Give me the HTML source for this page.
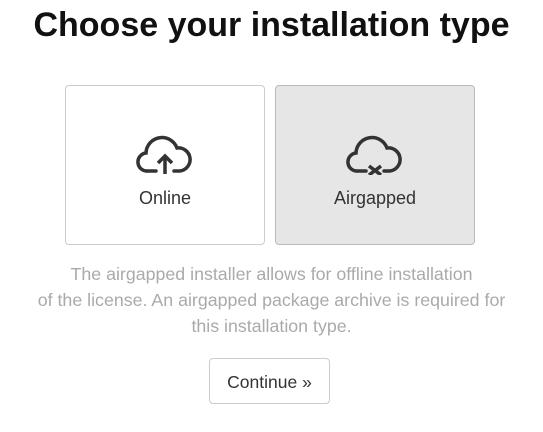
<!DOCTYPE html><html><head><style>
body{margin:0;width:543px;height:432px;background:#fff;font-family:"Liberation Sans",sans-serif;position:relative;overflow:hidden}
h1{position:absolute;top:6px;left:0;width:543px;text-align:center;margin:0;font-size:34px;font-weight:bold;color:#111}
.card{position:absolute;top:85px;width:198px;height:158px;border:1px solid #ccc;border-radius:4px;box-sizing:content-box}
.card .lbl{position:absolute;top:102px;width:100%;text-align:center;font-size:18px;color:#333}
.card svg{position:absolute;left:70px;top:47px}
p{position:absolute;top:261px;left:0;width:543px;text-align:center;margin:0;font-size:17.8px;line-height:26px;color:#aaa}
.btn{position:absolute;left:209px;top:358px;width:119px;height:44px;border:1px solid #ccc;border-radius:4px;text-align:center;line-height:46px;font-size:17.5px;color:#333}
</style></head><body>
<h1>Choose your installation type</h1>
<div class="card" style="left:65px;background:#fff">
<svg width="58" height="42" viewBox="0 0 58 42" fill="none" stroke="#333" stroke-width="3.5" stroke-linecap="round"><path d="M20 38H12A9 9 0 0 1 10 20A16 16 0 0 1 41 15A11 11 0 0 1 44 38H38"/><path d="M29 41V24M22 30L29 23L36 30" stroke-linecap="butt"/></svg>
<div class="lbl">Online</div></div>
<div class="card" style="left:275px;background:#e6e6e6;border-color:#bbb">
<svg width="58" height="42" viewBox="0 0 58 42" fill="none" stroke="#333" stroke-width="3.5" stroke-linecap="round"><path d="M20 38H12A9 9 0 0 1 10 20A16 16 0 0 1 41 15A11 11 0 0 1 44 38H38"/><path d="M23 33L35 42M35 33L23 42" stroke-linecap="butt"/></svg>
<div class="lbl">Airgapped</div></div>
<p>The airgapped installer allows for offline installation<br>of the license. An airgapped package archive is required for<br>this installation type.</p>
<div class="btn">Continue »</div>
</body></html>
